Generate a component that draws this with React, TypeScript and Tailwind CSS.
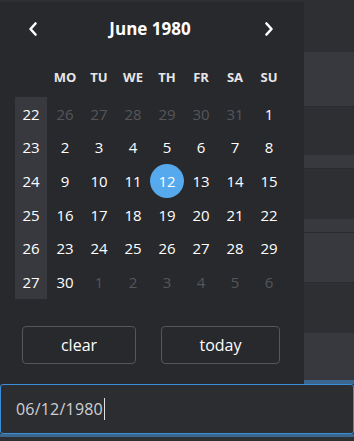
const font = { fontFamily: '"Open Sans", "Noto Sans", sans-serif' };

const weekdays = ['MO', 'TU', 'WE', 'TH', 'FR', 'SA', 'SU'];

type Day = { n: number; muted?: boolean; selected?: boolean };

const weeks: { wk: number; days: Day[] }[] = [
  { wk: 22, days: [26, 27, 28, 29, 30, 31].map((n) => ({ n, muted: true })).concat([{ n: 1 }]) },
  { wk: 23, days: [2, 3, 4, 5, 6, 7, 8].map((n) => ({ n })) },
  { wk: 24, days: [9, 10, 11, 12, 13, 14, 15].map((n) => ({ n, selected: n === 12 })) },
  { wk: 25, days: [16, 17, 18, 19, 20, 21, 22].map((n) => ({ n })) },
  { wk: 26, days: [23, 24, 25, 26, 27, 28, 29].map((n) => ({ n })) },
  { wk: 27, days: [{ n: 30 }].concat([1, 2, 3, 4, 5, 6].map((n) => ({ n, muted: true }))) },
];

function Chevron({ dir }: { dir: 'left' | 'right' }) {
  return (
    <svg width="12" height="16" viewBox="0 0 12 16" fill="none">
      <polyline
        points={dir === 'left' ? '8.5,2.5 3.5,8 8.5,13.5' : '3.5,2.5 8.5,8 3.5,13.5'}
        stroke="#ffffff"
        strokeWidth="2.6"
        strokeLinecap="round"
        strokeLinejoin="round"
      />
    </svg>
  );
}

// bandes de la page derrière le calendrier
const bands = [
  { h: 'h-[52px]', c: 'bg-[#2e2f33]' },
  { h: 'h-[55px]', c: 'bg-[#38393e] border-b border-[#2a2b2f]' },
  { h: 'h-[48px]', c: 'bg-[#2e2f33]' },
  { h: 'h-[14px]', c: 'bg-[#38393e] border-b border-[#2a2b2f]' },
  { h: 'h-[50px]', c: 'bg-[#2e2f33]' },
  { h: 'h-[14px]', c: 'bg-[#38393e] border-b border-[#2a2b2f]' },
  { h: 'h-[50px]', c: 'bg-[#38393e] border-b border-[#2a2b2f]' },
  { h: 'h-[50px]', c: 'bg-[#2e2f33]' },
  { h: 'h-[47px]', c: 'bg-[#38393e]' },
  { h: 'h-[4px]', c: 'bg-[#3a6790]' },
];

export default function App() {
  return (
    <div className="relative w-[354px] h-[441px] overflow-hidden bg-[#2e2f33]" style={font}>
      <div className="flex flex-col">
        {bands.map((b, i) => (
          <div key={i} className={`${b.h} ${b.c} w-full`} />
        ))}
        <div className="h-[50px] w-full rounded-[3px] border border-[#3a8fd8] bg-[#2c2d31] flex items-center pl-[15px]">
          <span className="text-[16px] text-[#cfd0d2] tracking-[0.2px]">06/12/1980</span>
          <span className="ml-[1px] h-[22px] w-[1px] bg-[#e0e0e0]" />
        </div>
        <div className="h-[3px] w-full bg-[#3a6790]" />
        <div className="h-[4px] w-full bg-[#2e2f33]" />
      </div>

      <div className="absolute left-[15px] top-[-15px] text-[13px] font-semibold text-[#a0a1a5] tracking-[1px]">
        BIRTH DOCUMENT
      </div>

      <div className="absolute left-0 top-[2px] w-[304px] h-[382px] bg-[#28292d] flex flex-col">
        <div className="h-[54px] flex items-center">
          <div className="w-[66px] flex justify-center">
            <Chevron dir="left" />
          </div>
          <div className="flex-1 text-center text-[17px] font-bold text-white">June 1980</div>
          <div className="w-[70px] flex justify-center">
            <Chevron dir="right" />
          </div>
        </div>

        <div className="ml-[14px] grid grid-cols-[repeat(8,34px)] h-[34px] mt-[5px] items-center">
          <div />
          {weekdays.map((d) => (
            <div key={d} className="text-center text-[13px] font-bold text-[#e6e6e8]">
              {d}
            </div>
          ))}
        </div>

        <div className="ml-[14px] mt-[2px] grid grid-cols-[repeat(8,34px)]">
          {weeks.map((w) => (
            <div key={w.wk} className="contents">
              <div className="h-[33.67px] mx-[1px] bg-[#38393e] flex items-center justify-center text-[15px] text-white">
                {w.wk}
              </div>
              {w.days.map((d, i) => (
                <div key={i} className="h-[33.67px] flex items-center justify-center">
                  <span
                    className={
                      d.selected
                        ? 'w-[34px] h-[34px] rounded-full bg-[#55a9ec] flex items-center justify-center text-[15px] text-white'
                        : d.muted
                          ? 'text-[15px] text-[#55565b]'
                          : 'text-[15px] text-white'
                    }
                  >
                    {d.n}
                  </span>
                </div>
              ))}
            </div>
          ))}
        </div>

        <div className="mt-[27px] flex">
          <button
            type="button"
            className="ml-[22px] w-[114px] h-[38px] rounded-[4px] border border-[#55565b] text-[16px] text-white"
          >
            clear
          </button>
          <button
            type="button"
            className="ml-[25px] w-[119px] h-[38px] rounded-[4px] border border-[#55565b] text-[16px] text-white"
          >
            today
          </button>
        </div>
      </div>
    </div>
  );
}
